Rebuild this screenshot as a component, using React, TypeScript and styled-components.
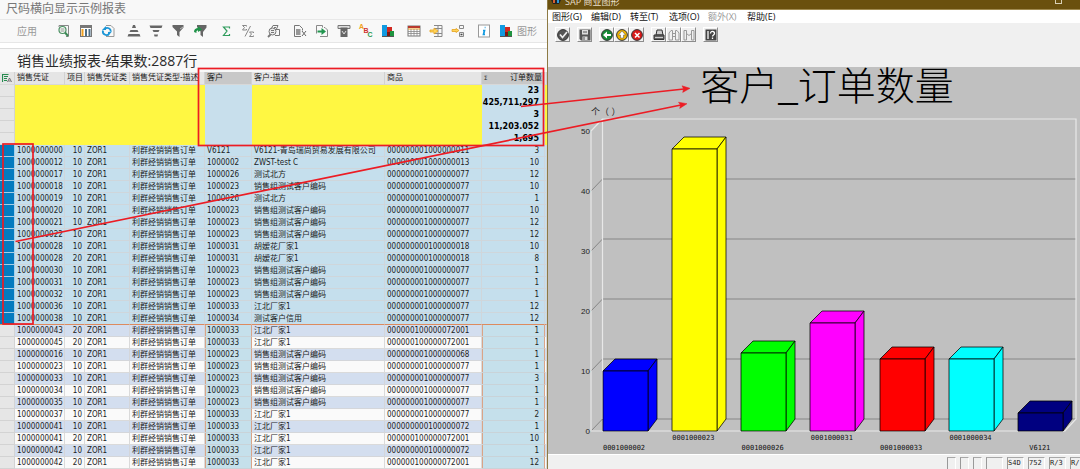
import React from 'react';
import styled, { createGlobalStyle, css } from 'styled-components';

const GlobalStyle = createGlobalStyle`
  *, *::before, *::after { box-sizing: border-box; }
  body { margin: 0; background: #f8f8f8; overflow-x: hidden; }
  button { font: inherit; color: inherit; margin: 0; padding: 0; border: 0; background: none; }
`;

const uiFont = `'Open Sans', 'Noto Sans CJK SC', sans-serif`;
const gridFont = `'DejaVu Sans Condensed', 'DejaVu Sans', 'Noto Sans CJK SC', sans-serif`;
const monoFont = `'DejaVu Sans Mono', 'Noto Sans CJK SC', monospace`;

/* ---------- page ---------- */

const Page = styled.main`
  position: relative;
  display: grid;
  grid-template-columns: 547fr 533fr;
  font-family: ${uiFont};
  overflow: hidden;
`;

const ReportPane = styled.section`
  display: flex;
  flex-direction: column;
  min-width: 0;
  background: #f8f8f8;
`;

const WindowTitle = styled.h1`
  margin: 0;
  height: 19px;
  padding-left: 6px;
  font-size: 12px;
  line-height: 18px;
  font-weight: 400;
  color: #777;
`;

const AppToolbar = styled.div`
  display: flex;
  align-items: center;
  gap: 4px;
  height: 24px;
  padding-left: 17px;
  border-top: 1px solid #e8e8e8;
  border-bottom: 1px solid #e6e6e6;
  color: #999;
  font-size: 10px;
  line-height: 22px;
`;

const AppMenuButton = styled.button`
  width: 32px;
  text-align: left;
`;

const ToolGroup = styled.div`
  display: flex;
`;

const ToolButton = styled.button`
  display: flex;
  align-items: center;
  justify-content: center;
  flex: none;
  width: 22px;
  height: 20px;
  svg { display: block; width: 14px; height: 14px; overflow: visible; }
`;

const GraphicButton = styled(ToolButton)`
  width: auto;
  padding-left: 4px;
  gap: 4px;
`;

const ReportHeading = styled.h2`
  margin: 0;
  height: 29px;
  padding: 0 0 0 17px;
  border-top: 5px solid #fff;
  font-size: 14px;
  line-height: 25px;
  font-weight: 400;
  color: #2a2a2a;
  box-shadow: inset 0 1px 0 #dcdcdc;
`;

/* ---------- result grid ---------- */

const Grid = styled.table`
  width: 100%;
  table-layout: fixed;
  border-collapse: separate;
  border-spacing: 0;
  font-family: ${gridFont};
  font-size: 8px;
  line-height: 11px;
  color: #1c1c1c;
`;

const Col = styled.col<{ $w?: number }>`
  width: ${p => (p.$w ? `${p.$w}px` : 'auto')};
`;

const HeadCell = styled.th<{ $marked?: boolean; $right?: boolean }>`
  height: 13px;
  padding: 0 2px;
  overflow: hidden;
  white-space: nowrap;
  font-weight: 400;
  line-height: 12px;
  text-align: ${p => (p.$right ? 'right' : 'left')};
  background: ${p => (p.$marked ? '#c8c8c8' : '#e5e5e5')};
  border-right: 1px solid #d2d2d2;
  border-bottom: 1px solid #d8d8d8;
  svg { display: block; width: 10px; height: 10px; }
`;

const SumMark = styled.span`
  float: left;
  font-size: 6px;
`;

type Tone = 'yellow' | 'blue' | 'selector' | 'active' | 'selected' | 'even' | 'odd' | 'marked';

const toneColor: Record<Tone, string> = {
  yellow: '#fff742',
  blue: '#c8dfec',
  selector: '#e6e6e6',
  active: '#047bbf',
  selected: '#c5dfed',
  even: '#d3deef',
  odd: '#fafafa',
  marked: '#c5e0eb',
};

const toneLine: Record<Tone, string> = {
  yellow: '#fff742',
  blue: '#c8dfec',
  selector: '#d3d3d3',
  active: '#a8cfe6',
  selected: '#cfd6db',
  even: '#d4d6da',
  odd: '#dadada',
  marked: '#c9d3d8',
};

const Cell = styled.td<{ $tone: Tone; $right?: boolean; $bold?: boolean; $wide?: boolean }>`
  height: 12px;
  padding: 0 ${p => (p.$wide ? 5 : 2)}px 0 2px;
  overflow: hidden;
  white-space: nowrap;
  text-align: ${p => (p.$right ? 'right' : 'left')};
  background: ${p => toneColor[p.$tone]};
  border-right: 1px solid ${p => toneLine[p.$tone]};
  border-bottom: 1px solid ${p => toneLine[p.$tone]};
  ${p => p.$bold && css`
    padding-left: 0;
    font-family: 'DejaVu Sans', sans-serif;
    font-weight: 700;
    color: #000;
  `}
  ${p => p.$tone === 'marked' && css`
    border-right-color: #d9a488;
    box-shadow: inset 1px 0 0 #d9a488;
  `}
`;

const Row = styled.tr<{ $last?: boolean }>`
  ${p => p.$last && css`
    td { border-bottom-color: #dd8a5e; }
  `}
`;

/* ---------- chart window ---------- */

const ChartWindow = styled.section`
  display: flex;
  flex-direction: column;
  min-width: 0;
  border-left: 1px solid #8d7a44;
  background: #f0f0f0;
`;

const TitleBar = styled.header`
  display: flex;
  justify-content: space-between;
  height: 10px;
  overflow: hidden;
  padding: 0 18px 0 3px;
  background: #6a500e;
  border-bottom: 1px solid #a08a50;
  color: #e6dfcc;
  font-size: 9px;
  line-height: 4px;
`;

const TitleText = styled.span`
  display: flex;
  gap: 4px;
  svg { display: block; width: 10px; height: 5px; }
`;

const MaximizeButton = styled.button`
  width: 7px;
  height: 4px;
  border: 1px solid #d8cfb4;
  border-top: 0;
`;

const MenuBar = styled.nav`
  display: flex;
  gap: 10px;
  height: 13px;
  padding-left: 4px;
  background: #fff;
  font-size: 9px;
  line-height: 13px;
  color: #111;
`;

const MenuItem = styled.button<{ $off?: boolean }>`
  flex: none;
  width: 29px;
  text-align: left;
  white-space: nowrap;
  color: ${p => (p.$off ? '#999' : '#111')};
`;

const ChartToolbar = styled.div`
  display: flex;
  align-items: flex-start;
  gap: 7px;
  height: 44px;
  padding: 4px 0 0 7px;
`;

const BevelButton = styled.button`
  display: flex;
  align-items: center;
  justify-content: center;
  width: 15px;
  height: 15px;
  border: 1px solid;
  border-color: #fff #8c8c8c #8c8c8c #fff;
  svg { display: block; width: 12px; height: 12px; }
`;

const ChartArea = styled.figure`
  flex: 1;
  margin: 0;
  background: #c0c0c0;
  svg { display: block; width: 100%; height: auto; }
`;

const ChartTitle = styled.figcaption`
  height: 38px;
  padding-left: 26px;
  font-family: 'Liberation Serif', 'Noto Sans CJK SC', serif;
  font-size: 39px;
  line-height: 40px;
  font-weight: 300;
  text-align: center;
  color: #000;
  white-space: nowrap;
`;

const StatusBar = styled.footer`
  display: flex;
  justify-content: flex-end;
  gap: 4px;
  height: 15px;
  padding-top: 2px;
  border-top: 1px solid #fff;
  overflow: hidden;
`;

const StatusCell = styled.span<{ $w: number }>`
  flex: none;
  width: ${p => p.$w}px;
  height: 14px;
  white-space: nowrap;
  border-left: 1px solid #999;
  border-top: 1px solid #a8a8a8;
  border-right: 1px solid #fff;
  font-family: ${monoFont};
  font-size: 7px;
  line-height: 11px;
  color: #222;
`;

const StatusTail = styled(StatusCell)`
  border-right: 0;
`;

const Annotations = styled.svg`
  position: absolute;
  top: 0;
  left: 0;
  width: 100%;
  height: 469px;
  pointer-events: none;
`;

/* ---------- icons ---------- */

const G = '#666';

const DetailIcon = () => (
  <svg viewBox="0 0 14 14" fill="none">
    <path d="M2 3V1.500h9.500v11H9" stroke="#888" />
    <circle cx="5.500" cy="6" r="3.500" fill="#f8fff8" stroke="#4b8f62" strokeWidth="1.200" />
    <path d="M3.500 5h4M3.500 7h4" stroke={G} strokeWidth=".7" />
    <path d="M8 8.500l3 3.500" stroke="#3d8b57" strokeWidth="2" />
  </svg>
);
const LayoutIcon = () => (
  <svg viewBox="0 0 14 14" fill="none">
    <rect x="1.500" y="1.500" width="11" height="11" fill="#fff" stroke="#777" />
    <path d="M2 3h10" stroke="#777" strokeWidth="2" />
    <path d="M3.500 5v7" stroke="#f0a020" strokeWidth="2" />
    <path d="M7 5v7M10.500 5v7" stroke="#4f6f86" strokeWidth="2" />
  </svg>
);
const RefreshIcon = () => (
  <svg viewBox="0 0 14 14" fill="none">
    <path d="M5 1.500h5l3 3v8H5" stroke="#999" />
    <path d="M9.800 7.500A3.500 3.500 0 0 0 4 4.800M2 6.500a3.500 3.500 0 0 0 6 3.300" stroke="#1b95d6" strokeWidth="1.800" />
    <path d="M1 6L5 2v4zM11 7.500L7 12V8z" fill="#1b95d6" />
  </svg>
);
const SortAscIcon = () => (
  <svg viewBox="0 0 14 14" fill={G}><path d="M6 1h2l1 3H5zM3.500 6h7l1 2h-9zM1.500 10h11l1 2.500H.5z" /></svg>
);
const SortDescIcon = () => (
  <svg viewBox="0 0 14 14" fill={G}><path d="M.5 1.500h13l-1 2.500h-11zM3.500 6h7l-1 2h-5zM5 10.500h4l-.5 2h-3z" /></svg>
);
const FilterIcon = () => (
  <svg viewBox="0 0 14 14"><path d="M1.500 1h11v2.500L8.500 8v5L6 11V7.500L1.500 3z" fill={G} /><path d="M9 5l3-2" stroke="#bbb" /></svg>
);
const FilterSetIcon = () => (
  <svg viewBox="0 0 14 14">
    <path d="M4 1h9.500v2.500L10 8v5L7.500 11V7.500L4 3z" fill={G} />
    <path d="M1 8c0-3 2-4 4-4V2l4 3.500L5 8V6.500C4 6.500 3 7 3.500 9z" fill="#1f9248" />
  </svg>
);
const SumIcon = () => (
  <svg viewBox="0 0 14 14"><path d="M10.500 4.500V3h-6l3.500 4-3.500 4.500h6V10" fill="none" stroke="#2f9c5c" strokeWidth="1.200" /></svg>
);
const SubtotalIcon = () => (
  <svg viewBox="0 0 14 14" fill="none" stroke="#888">
    <path d="M5.500 2.500V1.500h-4l2 2-2 2.500h4V5M12.500 9V8h-4l2 2-2 2.500h4v-1M9.500 2L4 12.500" />
  </svg>
);
const PreviewIcon = () => (
  <svg viewBox="0 0 14 14" fill="none" stroke="#777">
    <path d="M4 5L6 1.500h5l-1.500 3.500M2 5.500h10.500v6H8" />
    <circle cx="5.500" cy="7.500" r="3.500" fill="#eee" /><path d="M3.500 10.500L1 13" strokeWidth="1.800" /><path d="M7 3.500h2M4 6.500h3M4 8.500h3" />
  </svg>
);
const SpreadsheetIcon = () => (
  <svg viewBox="0 0 14 14" fill="none" stroke="#777">
    <path d="M1.500 1.500h5l3 3v2M1.500 1.500v11H8" /><path d="M3 6h4.500M3 8h4.500M3 10h4.500" strokeWidth="1.500" /><path d="M9 7l4 5M13 7l-4 5" stroke={G} />
  </svg>
);
const ExportIcon = () => (
  <svg viewBox="0 0 14 14" fill="none">
    <path d="M1.500 9.500v-8h6v2M9 3.500h1l2.500 2.500v6.500H5" stroke="#888" />
    <path d="M2.500 6.500h4V4L11 7.500 6.500 11V8.500h-4z" fill="#239650" />
  </svg>
);
const DownloadIcon = () => (
  <svg viewBox="0 0 14 14" fill="none"><path d="M1 1.500h12v3H1z" fill="#ddd" stroke="#777" /><path d="M3.500 3.500h7V13h-7z" fill={G} /><path d="M5 7l2 3 2-3" stroke="#ddd" /></svg>
);
const AbcIcon = () => (
  <svg viewBox="0 0 14 14" fontFamily="Liberation Sans, sans-serif" fontWeight="700" fontSize="7">
    <text x="0" y="5" fill="#f0a020">A</text><text x="4.500" y="9" fill="#cf3430">B</text><text x="8.500" y="13" fill="#2a9a50">C</text>
  </svg>
);
const GraphIcon = () => (
  <svg viewBox="0 0 14 14">
    <path d="M1 1h5v11H1z" fill="#129ae0" /><path d="M6 3h5v5H6z" fill="#d02820" /><path d="M6 8h4v4H6z" fill="#7c1810" />
    <path d="M9 7h4v5H9z" fill="#1f9440" /><path d="M1 12.500h12" stroke="#555" />
  </svg>
);
const VariantIcon = () => (
  <svg viewBox="0 0 14 14" fill="none"><rect x="1" y="2" width="12" height="10" fill="#fff" stroke="#777" /><path d="M1 3h12" stroke="#b83a2e" strokeWidth="2" /><path d="M1 5h12" stroke="#f0a020" /><path d="M1 7.500h12M1 9.500h12M4 5v7M7 5v7M10 5v7" stroke="#888" strokeWidth=".8" /></svg>
);
const InsertColumnIcon = () => (
  <svg viewBox="0 0 14 14" fill="none" stroke="#888"><path d="M5 1.500h8v11H5M9 1.500v11M5 4.500h8M9 9.500h4M5 9.500h4" /><path d="M1 6h4V4l4 3-4 3V8H1z" fill="#ffd45a" stroke="#e5a21d" strokeWidth=".8" /></svg>
);
const InsertGroupIcon = () => (
  <svg viewBox="0 0 14 14" fill="none" stroke="#888"><path d="M8.500 1.500h4v3h-4zM8.500 8.500h4v4h-4z" /><path d="M9.500 10.500h2" stroke="#444" strokeWidth="1.600" /><path d="M1 5.500h4v-1l3 2-3 2v-1H1z" fill="#ffd45a" stroke="#e5a21d" strokeWidth=".8" /></svg>
);
const InfoIcon = () => (
  <svg viewBox="0 0 14 14"><rect x="1.500" y="1" width="11" height="12" fill="#fff" stroke="#999" /><path d="M7.700 3.500h.8M6 6.500h1.500l-1 4H8" stroke="#129ae0" strokeWidth="1.700" fill="none" /></svg>
);
const SelectAllIcon = () => (
  <svg viewBox="0 0 10 10" fill="none"><path d="M.5 1v8M.5 1.500h6M2 3.500h4M2 5.500h3M2 7.500h3" stroke="#278c50" strokeWidth="1.200" /><path d="M5.500 9L7.500 5l2 4M6.500 8h2" stroke="#666" strokeWidth=".9" /></svg>
);

const disc = (fill: string) => <circle cx="6" cy="6" r="5.400" fill={fill} stroke="#333" />;
const AcceptIcon = () => <svg viewBox="0 0 12 12" fill="none">{disc('#555')}<path d="M3 5.500l2.500 3L10 3" stroke="#eee" strokeWidth="1.700" /></svg>;
const SaveIcon = () => <svg viewBox="0 0 12 12"><path d="M.5.500h11v11H2L.5 10z" fill="#555" /><path d="M3 1h6v4.500H3zM3.500 7.500h5V11h-5z" fill="#ddd" /><path d="M4 3h4M5 8v3" stroke="#555" /></svg>;
const BackIcon = () => <svg viewBox="0 0 12 12">{disc('#148a35')}<path d="M2 6l4-3.500V5h4v2H6v2.500z" fill="#fff" /></svg>;
const ExitIcon = () => <svg viewBox="0 0 12 12">{disc('#f0b400')}<path d="M6 2l3.500 4H7.500v3h-3V6h-2z" fill="#fff" stroke="#555" strokeWidth=".5" /></svg>;
const CancelIcon = () => <svg viewBox="0 0 12 12">{disc('#d81818')}<path d="M4 4l4.500 4.500M8.500 4L4 8.500" stroke="#fff" strokeWidth="1.500" /></svg>;
const PrintIcon = () => <svg viewBox="0 0 12 12"><path d="M3 6l1-5h5l1 5z" fill="#ccc" stroke="#333" /><path d="M1 6h10v4.500H1z" fill="#666" stroke="#333" /><path d="M2 8.500h8" stroke="#ccc" /></svg>;
const FindIcon = () => <svg viewBox="0 0 12 12" fill="none" stroke="#999"><path d="M1 11V4l2-2.500h1.500V11zM7.500 11V1.500H9L11 4v7zM4.500 4.500h3M4.500 7.500h3" /></svg>;
const FindNextIcon = () => <svg viewBox="0 0 12 12" fill="none" stroke="#999"><path d="M1 11V1.500h2.500V11zM8.500 11V1.500H11V11zM3.500 4.500l2.500 2 2.500-2" /></svg>;
const HelpIcon = () => (
  <svg viewBox="0 0 12 12"><path d="M.5.500h11v11H.5z" fill="#444" /><path d="M2 2h2v8H2z" fill="#bbb" /><path d="M5.500 4.500c0-3 4-2.500 4 0 0 1.500-2 1.500-2 3M7.500 8.500V10" fill="none" stroke="#fff" strokeWidth="1.300" /></svg>
);

/* ---------- data ---------- */

const toolGroups: [string, React.FC][][] = [
  [['明细', DetailIcon], ['布局', LayoutIcon], ['刷新', RefreshIcon]],
  [['升序', SortAscIcon], ['降序', SortDescIcon], ['过滤', FilterIcon], ['设置过滤', FilterSetIcon]],
  [['总计', SumIcon], ['小计', SubtotalIcon]],
  [['打印预览', PreviewIcon]],
  [['电子表格', SpreadsheetIcon], ['导出', ExportIcon], ['本地文件', DownloadIcon], ['ABC 分析', AbcIcon], ['图表', GraphIcon]],
  [['更改布局', VariantIcon], ['选择布局', InsertColumnIcon], ['保存布局', InsertGroupIcon]],
];

const chartTools: [string, React.FC][][] = [
  [['确认', AcceptIcon]],
  [['保存', SaveIcon]],
  [['返回', BackIcon], ['退出', ExitIcon], ['取消', CancelIcon]],
  [['打印', PrintIcon], ['查找', FindIcon], ['查找下一个', FindNextIcon]],
  [['帮助', HelpIcon]],
];

const T = '销售组测试客户编码';
const M77 = '000000001000000077';
const J = '江北厂家1';

type OrderRow = [string, number, string, string, string, number];
const rows: OrderRow[] = [
  ['1000000000', 10, 'V6121', 'V6121-青岛瑞尚贸易发展有限公司', '000000001000000011', 3],
  ['1000000012', 10, '1000002', 'ZWST-test C', '000000001000000013', 10],
  ['1000000017', 10, '1000026', '测试北方', M77, 12],
  ['1000000018', 10, '1000023', T, M77, 10],
  ['1000000019', 10, '1000026', '测试北方', M77, 1],
  ['1000000020', 10, '1000023', T, M77, 10],
  ['1000000021', 10, '1000023', T, M77, 12],
  ['1000000022', 10, '1000023', T, M77, 12],
  ['1000000028', 10, '1000031', '胡嫒花厂家1', '000000000100000018', 10],
  ['1000000028', 20, '1000031', '胡嫒花厂家1', '000000000100000018', 8],
  ['1000000030', 10, '1000023', T, M77, 1],
  ['1000000031', 10, '1000023', T, M77, 1],
  ['1000000032', 10, '1000023', T, M77, 1],
  ['1000000036', 10, '1000033', J, M77, 12],
  ['1000000038', 10, '1000034', '测试客户信用', M77, 12],
  ['1000000043', 20, '1000033', J, '000000100000072001', 1],
  ['1000000045', 20, '1000033', J, '000000100000072001', 1],
  ['1000000016', 10, '1000023', T, '000000001000000068', 1],
  ['1000000023', 10, '1000023', T, M77, 1],
  ['1000000033', 10, '1000023', T, M77, 3],
  ['1000000034', 10, '1000023', T, M77, 1],
  ['1000000035', 10, '1000023', T, M77, 1],
  ['1000000037', 10, '1000033', J, M77, 2],
  ['1000000041', 10, '1000033', J, '000000000100000072', 1],
  ['1000000041', 20, '1000033', J, '000000100000072001', 10],
  ['1000000042', 10, '1000033', J, '000000000100000072', 1],
  ['1000000042', 20, '1000033', J, '000000100000072001', 12],
];
const SELECTED = 15;

const totals = ['23', '425,711,297', '3', '11,203.052', '1,695'];

const bars = [
  { label: '0001000002', value: 10, color: '#0000ff' },
  { label: '0001000023', value: 47, color: '#ffff00' },
  { label: '0001000026', value: 13, color: '#00ff00' },
  { label: '0001000031', value: 18, color: '#ff00ff' },
  { label: '0001000033', value: 12, color: '#ff0000' },
  { label: '0001000034', value: 12, color: '#00ffff' },
  { label: 'V6121', value: 3, color: '#000080' },
];

/* ---------- chart ---------- */

const BASE = 326;
const yOf = (v: number) => BASE - v * 6;

const BarChart = () => (
  <svg viewBox="0 0 532 349" role="img" aria-label="客户_订单数量">
    <g fill="none" stroke="#868686">
      {[0, 10, 20, 30, 40].map(v => (
        <path key={v} d={`M43 ${yOf(v)}L54.500 ${yOf(v) - 12}H528`} />
      ))}
    </g>
    <path d={`M54.500 ${BASE - 12}V14H528V${BASE - 12}L517 ${BASE}H43V${yOf(50)}L54.500 14`} fill="none" stroke="#e8e8e8" strokeWidth="1.200" />
    <g fontFamily="Liberation Sans, Noto Sans CJK SC, sans-serif" fontSize="8" fill="#222">
      {[0, 10, 20, 30, 40, 50].map(v => (
        <text key={v} x="42" y={yOf(v) + 3} textAnchor="end">{v}</text>
      ))}
      <text x="43" y="10" fontSize="9">个（ ）</text>
    </g>
    {bars.map((b, i) => {
      const x = Math.round(54.500 + i * 69.300);
      const t = yOf(b.value);
      return (
        <g key={b.label} fill={b.color} stroke="#000" strokeOpacity=".75" strokeLinejoin="round">
          <path d={`M${x} ${t}l12 -12h42l-9 12z`} />
          <path d={`M${x + 45} ${t}l9 -12V${BASE - 12}l-9 12z`} />
          <path d={`M${x} ${t}h45V${BASE}h-45z`} />
        </g>
      );
    })}
    <g fontFamily="DejaVu Sans Mono, monospace" fontSize="7" fill="#111">
      {bars.map((b, i) => (
        <text key={b.label} x={76 + i * 69.300} y={i % 2 ? 335 : 345} textAnchor="middle">{b.label}</text>
      ))}
    </g>
  </svg>
);

/* ---------- app ---------- */

export default function App() {
  return (
    <Page>
      <GlobalStyle />
      <ReportPane>
        <WindowTitle>尺码横向显示示例报表</WindowTitle>
        <AppToolbar>
          <AppMenuButton>应用</AppMenuButton>
          {toolGroups.map((group, i) => (
            <ToolGroup key={i}>
              {group.map(([name, Icon]) => (
                <ToolButton key={name} aria-label={name}><Icon /></ToolButton>
              ))}
            </ToolGroup>
          ))}
          <ToolGroup>
            <ToolButton aria-label="信息"><InfoIcon /></ToolButton>
            <GraphicButton><GraphIcon />图形</GraphicButton>
          </ToolGroup>
        </AppToolbar>
        <ReportHeading>销售业绩报表-结果数:2887行</ReportHeading>
        <Grid>
          <colgroup>
            <Col $w={15} /><Col $w={50} /><Col $w={20} /><Col $w={45} /><Col $w={75} />
            <Col $w={47} /><Col /><Col $w={97} /><Col $w={63} /><Col $w={2} />
          </colgroup>
          <thead>
            <tr>
              <HeadCell aria-label="全选"><SelectAllIcon /></HeadCell>
              <HeadCell>销售凭证</HeadCell>
              <HeadCell>项目</HeadCell>
              <HeadCell>销售凭证类</HeadCell>
              <HeadCell>销售凭证类型-描述</HeadCell>
              <HeadCell $marked>客户</HeadCell>
              <HeadCell>客户-描述</HeadCell>
              <HeadCell>商品</HeadCell>
              <HeadCell $marked $right><SumMark>Σ</SumMark>订单数量</HeadCell>
              <HeadCell />
            </tr>
          </thead>
          <tbody>
            {totals.map(total => (
              <Row key={total}>
                <Cell $tone="selector" />
                <Cell $tone="yellow" colSpan={4} />
                <Cell $tone="blue" />
                <Cell $tone="yellow" colSpan={2} />
                <Cell $tone="blue" $right $bold $wide>{total}</Cell>
                <Cell $tone="yellow" />
              </Row>
            ))}
            {rows.map(([doc, item, customer, name, product, qty], i) => {
              const selected = i < SELECTED;
              const tone: Tone = selected ? 'selected' : i % 2 ? 'even' : 'odd';
              const marked: Tone = selected ? 'selected' : 'marked';
              return (
                <Row key={`${doc}-${item}`} $last={i === SELECTED - 1}>
                  <Cell $tone={selected ? 'active' : 'selector'} />
                  <Cell $tone={tone}>{doc}</Cell>
                  <Cell $tone={tone} $right>{item}</Cell>
                  <Cell $tone={tone}>ZOR1</Cell>
                  <Cell $tone={tone}>利群经销销售订单</Cell>
                  <Cell $tone={marked}>{customer}</Cell>
                  <Cell $tone={tone}>{name}</Cell>
                  <Cell $tone={tone}>{product}</Cell>
                  <Cell $tone={marked} $right $wide>{qty}</Cell>
                  <Cell $tone={tone} />
                </Row>
              );
            })}
          </tbody>
        </Grid>
      </ReportPane>

      <ChartWindow>
        <TitleBar>
          <TitleText>
            <svg viewBox="0 0 10 5"><path d="M0 0h10L8 4H2z" fill="#222" /><path d="M2 0h2v3H2z" fill="#d86030" /><path d="M6 0h2v3H6z" fill="#2f9ad8" /></svg>
            SAP 商业图形
          </TitleText>
          <MaximizeButton aria-label="最大化" />
        </TitleBar>
        <MenuBar>
          <MenuItem>图形(G)</MenuItem>
          <MenuItem>编辑(D)</MenuItem>
          <MenuItem>转至(T)</MenuItem>
          <MenuItem>选项(O)</MenuItem>
          <MenuItem $off>额外(X)</MenuItem>
          <MenuItem>帮助(E)</MenuItem>
        </MenuBar>
        <ChartToolbar>
          {chartTools.map((group, i) => (
            <ToolGroup key={i}>
              {group.map(([name, Icon]) => (
                <BevelButton key={name} aria-label={name}><Icon /></BevelButton>
              ))}
            </ToolGroup>
          ))}
        </ChartToolbar>
        <ChartArea>
          <ChartTitle>客户_订单数量</ChartTitle>
          <BarChart />
        </ChartArea>
        <StatusBar>
          <StatusCell $w={9} /><StatusCell $w={9} /><StatusCell $w={9} /><StatusCell $w={17} />
          <StatusCell $w={17}>S4D</StatusCell>
          <StatusCell $w={17}>752</StatusCell>
          <StatusCell $w={17}>R/3</StatusCell>
          <StatusTail $w={10}>R/</StatusTail>
        </StatusBar>
      </ChartWindow>

      <Annotations viewBox="0 0 1080 469" preserveAspectRatio="none" fill="none" stroke="#ec1c24" strokeWidth="1.700" aria-hidden="true">
        <rect x="198.500" y="68.500" width="345" height="77" />
        <rect x="3" y="144" width="30" height="180" />
        <path d="M521 106.500L684 89M15.500 241.500L681 105" />
        <path d="M690 88.300l-8 -2.500 1.500 3 -.8 3.600zM687 103.700l-8.500 -1.500 2 2.800 -.8 3.400z" fill="#ec1c24" strokeWidth=".5" />
      </Annotations>
    </Page>
  );
}
